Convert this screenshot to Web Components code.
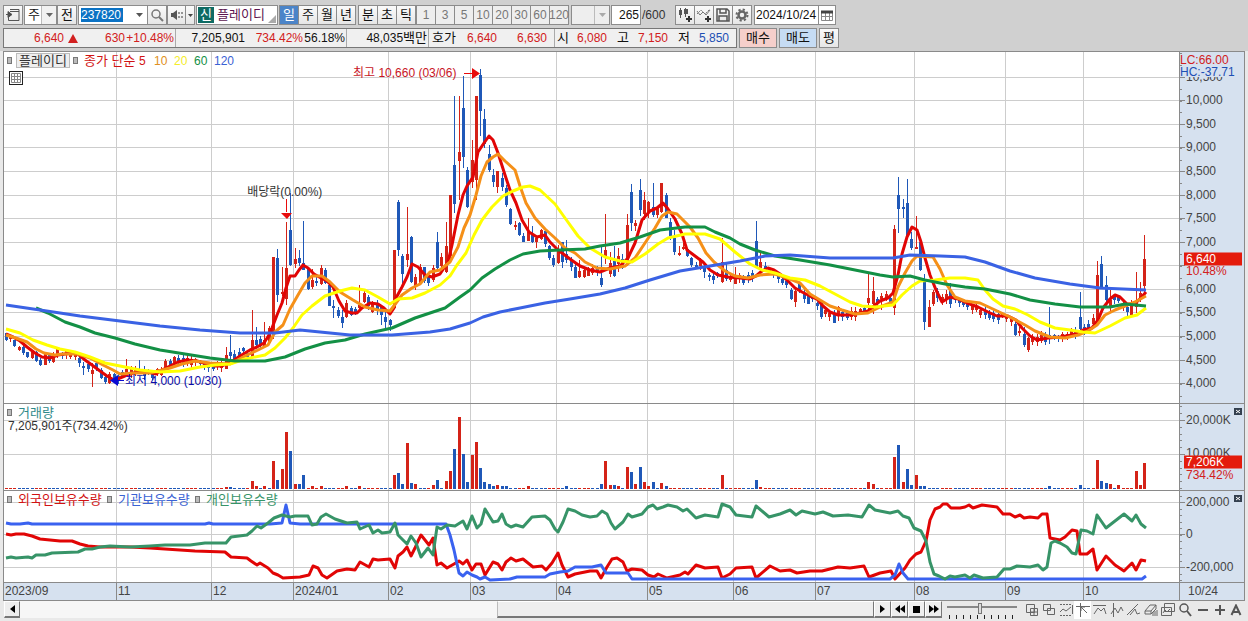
<!DOCTYPE html>
<html lang="ko">
<head>
<meta charset="utf-8">
<title>플레이디 차트</title>
<style>
html,body{margin:0;height:100%}
body{background:#e9e9e9;font:12px/16px "Liberation Sans","Noto Sans CJK KR",sans-serif;color:#111}
stock-app{min-height:100vh}
</style>
</head>
<body>
<stock-app></stock-app>

<script>
const define = (name, html, setup) => customElements.define(name, class extends HTMLElement {
  constructor(){
    super();
    const root = this.attachShadow({mode:'open'});
    const t = document.createElement('template');
    t.innerHTML = typeof html === 'function' ? html(this) : html;
    root.append(t.content.cloneNode(true));
    if (setup) setup(this, root);
  }
});

/* ---------- small controls ---------- */
define('tool-button', `<style>
:host{display:block;flex:none;width:var(--w,20px);height:20px}
button{display:flex;align-items:center;justify-content:center;width:100%;height:100%;padding:0;box-sizing:border-box;
 border:1px solid #8c8c8c;background:var(--bg,linear-gradient(#fafafa,#e6e6e6));color:var(--fg,#111);font:inherit;font-size:13px;white-space:nowrap}
</style><button type="button"><slot></slot></button>`, (el, root) => {
  if (el.title) root.querySelector('button').setAttribute('aria-label', el.title);
});

define('drop-down', el => `<style>
:host{display:block;position:relative;flex:none;width:var(--w,33px);height:20px}
select{appearance:none;width:100%;height:100%;box-sizing:border-box;border:1px solid #8c8c8c;border-radius:0;margin:0;padding:0 0 0 3px;background:linear-gradient(90deg,#fff 0,#fff calc(100% - 15px),#bbb calc(100% - 15px),#bbb calc(100% - 14px),#f1f1f1 calc(100% - 14px));color:#111;font:inherit;font-size:13px}
select:disabled{background:linear-gradient(90deg,#eee 0,#eee calc(100% - 15px),#bbb calc(100% - 15px),#bbb calc(100% - 14px),#eee calc(100% - 14px));opacity:1}
svg{position:absolute;right:4px;top:8px;pointer-events:none}
</style><select aria-label="${el.getAttribute('label')}" ${el.hasAttribute('off') ? 'disabled' : ''}><option>${el.getAttribute('value')}</option></select>
<svg width="7" height="4"><path d="M0 0h7L3.500 4z" fill="${el.hasAttribute('off') ? '#aaa' : '#666'}"/></svg>`);

/* ---------- top toolbar ---------- */
define('stock-toolbar', `<style>
:host{display:flex;align-items:center;height:20px}
.g{display:flex;flex:none;margin-right:1px}
.g.z{margin-right:0}.g.w{margin-right:2px}
.g tool-button+tool-button{margin-left:-1px}
.d{--fg:#777;--bg:#eee}
.code,.num,.date{height:20px;box-sizing:border-box;border:1px solid #8c8c8c;background:#fff;display:flex;align-items:center;flex:none}
input{border:0;padding:0;margin:0;font:inherit;background:none;min-width:0;color:inherit}
.code{width:54px;border-right:0;padding-left:2px}
.code input{width:42px;height:14px;background:#0b72c4;color:#fff}
.arr{width:15px;height:20px;box-sizing:border-box;border:1px solid #8c8c8c;border-width:1px 0;background:#fff;padding:0;flex:none;display:flex;align-items:center;justify-content:center}
.name{width:82px;height:20px;box-sizing:border-box;border:1px solid #8c8c8c;background:#fff;display:flex;flex:none;align-items:center;gap:3px;padding-left:1px;position:relative;font-size:13px;color:#5c1450;margin-right:1px}
.name b{background:#0f6b63;color:#fff;font-weight:400;width:16px;height:16px;line-height:16px;text-align:center}
.name input{width:52px}
.name i{position:absolute;right:1px;bottom:1px;border:4px solid #aaa;border-top-color:transparent;border-left-color:transparent}
.num{width:30px;justify-content:flex-end;padding-right:1px}.num input{width:22px;text-align:right}
.tot{width:34px;box-sizing:border-box;padding-left:1px;color:#333;flex:none}
.date{width:65px;padding-left:1px}.date input{width:62px}
</style>
<div class="g"><tool-button title="창 열기"><svg width="16" height="14" fill="none" stroke="#555"><path d="M5 1.500h9v11H3.500v-4M5 3.500h9" /><path d="M1 6.500h4M3 3.500v6l4-3z" fill="#444"/></svg></tool-button></div>
<drop-down label="구분" value="주"></drop-down>
<div class="g"><tool-button>전</tool-button></div>
<div class="code"><input aria-label="종목코드" value="237820"></div><button class="arr" aria-label="최근 종목"><svg width="7" height="4"><path d="M0 0h7L3.500 4z" fill="#555"/></svg></button>
<div class="g z"><tool-button title="검색"><svg width="14" height="14" fill="none" stroke="#777" stroke-width="1.500"><circle cx="6" cy="6" r="4"/><path d="M9 9l4 4" stroke-width="2"/></svg></tool-button></div>
<div class="g"><tool-button title="소리" style="--w:19px"><svg width="14" height="12"><path d="M1 4h2l4-3v10L3 8H1z" fill="#555"/><path d="M9 3v6M12 3v6" stroke="#777" stroke-width="1.500" stroke-dasharray="2 2"/></svg></tool-button><tool-button title="소리 메뉴" style="--w:10px"><svg width="5" height="3"><path d="M0 0h5L2.500 3z" fill="#444"/></svg></tool-button></div>
<div class="name"><b>신</b><input aria-label="종목명" value="플레이디"><i></i></div>
<div class="g w"><tool-button style="--bg:#4b84c8;--fg:#fff">일</tool-button><tool-button>주</tool-button><tool-button>월</tool-button><tool-button>년</tool-button></div>
<div class="g z"><tool-button>분</tool-button><tool-button>초</tool-button><tool-button>틱</tool-button></div>
<div class="g w d" id="mins"></div>
<drop-down label="사용자 주기" value="" off style="--w:39px;margin-right:1px"></drop-down>
<label class="num"><input aria-label="표시 봉 수" value="265"></label><span class="tot">/600</span>
<div class="g w"><tool-button title="봉 추가"><svg width="16" height="16"><path d="M3.500 1v10M8.500 1v9" stroke="#555"/><path d="M2 3h3v5H2zM7 2h4v5H7z" fill="#555"/><path d="M9 12h6M12 9v6" stroke="#333" stroke-width="2"/></svg></tool-button><tool-button title="지표 추가"><svg width="16" height="16" fill="none" stroke="#777"><path d="M1 7l4-4 4 4 5-5" stroke-dasharray="2 1"/><path d="M1 4l3 4 3-3 3 3 4-5"/><path d="M9 12h6M12 9v6" stroke="#333" stroke-width="2"/></svg></tool-button><tool-button title="저장"><svg width="14" height="14" fill="none" stroke="#555" stroke-width="1.500"><path d="M1 1h10l2 2v10H1zM4 1v4h6V1M3 13V8h8v5"/></svg></tool-button><tool-button title="설정"><svg width="14" height="14" fill="none" stroke="#666"><circle cx="7" cy="7" r="3.500" stroke-width="2.500"/><circle cx="7" cy="7" r="5.500" stroke-width="2" stroke-dasharray="2.200 2.120"/></svg></tool-button></div>
<label class="date"><input aria-label="날짜" value="2024/10/24"></label><tool-button title="달력" style="--w:18px;--bg:#fff;margin-left:-1px"><svg width="12" height="11" fill="none" stroke="#888"><path d="M.5 1.500h11v9H.5zM0 6.500h12M4.500 2v8M8.500 2v8"/><path d="M0 2h12" stroke="#444" stroke-width="3"/></svg></tool-button>`,
(el, root) => {
  root.getElementById('mins').innerHTML = [1,3,5,10,20,30,60,120].map(n => `<tool-button><span style="font-size:12px">${n}</span></tool-button>`).join('');
});

define('quote-bar', `<style>
:host{display:flex;align-items:center;gap:2px;height:20px}
.q{display:flex;flex:none;box-sizing:border-box;height:20px;border:1px solid #777;background:#f0f0f0;line-height:18px;width:734px}
.q>div{display:flex;box-sizing:border-box;border-right:1px solid #aaa}
.q>div:last-child{border:0}
span{text-align:right;white-space:pre}
.r{color:#d22020}.b{color:#1d4fb4}
em{font-style:normal;font-size:13px}
svg{margin:5px 0 0 4px}
</style>
<div class="q">
<div style="width:172px" class="r"><span style="width:60px">6,640</span><svg width="10" height="9"><path d="M5 0l5 9H0z" fill="#d22020"/></svg><span style="width:47px">630</span><span style="width:49px">+10.48%</span></div>
<div style="width:171px"><span style="width:69px">7,205,901</span><span style="width:58px" class="r">734.42%</span><span style="width:42px">56.18%</span></div>
<div style="width:82px"><span style="width:80px">48,035<em>백만</em></span></div>
<div style="width:126px"><span style="width:27px"><em>호가</em></span><span style="width:41px" class="r">6,640</span><span style="width:50px" class="r">6,630</span></div>
<div style="width:181px"><span style="width:14px"><em>시</em></span><span style="width:38px" class="r">6,080</span><span style="width:22px"><em>고</em></span><span style="width:39px" class="r">7,150</span><span style="width:22px"><em>저</em></span><span style="width:39px" class="b">5,850</span></div>
</div>
<tool-button style="--w:38px;--bg:#f6cfcb">매수</tool-button><tool-button style="--w:38px;--bg:#c6dcf4">매도</tool-button><tool-button>평</tool-button>`);

/* ---------- chart data (plot units) ---------- */
const STEP = 4.313, X0 = 6.700, N = 265;
const pts = s => s.trim().split(/\s+/).map(p => p.split(',').map(Number));
const ma5 = "6,334 13,337 20,341 27,347 35,353 42,357 50,358 58,355 65,354 72,353 78,354 85,360 92,365 100,371 107,376 114,380 120,378 127,375 134,373 141,371 148,372 156,374 162,370 170,366 178,362 187,360 197,361 207,364 215,366 222,366 228,363 234,360 240,356 250,350 257,347 264,343 269,335 272,328 277,315 282,303 286,288 290,276 295,276 299,270 303,265 308,268 314,274 321,278 327,281 333,287 339,301 345,311 352,313 357,313 362,308 370,303 378,304 384,308 390,314 394,308 396,298 402,287 407,277 412,264 418,267 425,275 432,277 440,274 448,262 452,245 458,215 463,195 467,186 473,177 478,152 484,143 489,136 493,140 498,153 505,175 510,190 516,203 522,220 529,232 537,237 545,235 550,242 558,250 570,259 580,266 590,270 600,272 610,268 620,266 628,258 635,243 642,220 650,211 657,208 663,203 668,209 675,219 682,234 687,250 695,256 703,262 710,270 718,275 728,277 740,278 750,279 756,276 762,271 768,268 774,270 780,274 787,280 795,288 802,292 810,296 817,299 823,306 830,312 838,315 850,315 860,313 868,311 874,306 880,301 888,298 893,293 898,275 902,254 907,237 912,227 917,230 921,242 925,258 930,275 936,290 942,302 950,297 958,299 967,303 978,307 988,312 997,316 1008,316 1016,320 1022,328 1030,336 1037,340 1048,338 1060,337 1072,335 1083,330 1092,328 1098,320 1103,308 1110,299 1115,295 1120,297 1127,304 1134,304 1140,299 1146,292";
const ma10 = "6,335 16,338 27,342 36,349 44,353 55,355 62,354 78,354 90,358 103,365 113,370 120,374 135,373 150,373 162,370 170,368 182,364 195,361 210,363 230,364 245,356 258,350 268,345 275,332 283,325 290,309 298,295 305,283 312,276 322,276 330,282 340,292 353,300 365,307 378,310 390,311 396,303 402,295 412,288 420,284 430,272 440,270 450,262 458,247 464,228 470,215 476,195 481,176 487,162 493,157 498,154 505,161 515,170 520,186 526,203 535,218 545,229 555,238 565,248 575,253 585,262 597,268 610,269 625,266 635,258 645,243 655,228 662,216 668,212 677,214 690,227 698,238 706,253 714,262 725,271 735,276 748,278 760,275 775,274 790,279 800,283 810,294 820,300 830,306 842,310 855,314 868,313 880,307 893,302 898,287 905,273 912,261 917,256 933,257 940,269 947,285 955,297 965,301 980,303 995,310 1010,317 1025,325 1035,331 1050,337 1065,338 1078,335 1088,331 1097,325 1105,315 1115,310 1125,306 1135,302 1146,296";
const ma20 = "6,329 20,333 33,340 47,345 60,349 75,352 90,357 105,363 120,366 140,370 160,372 180,371 200,367 215,365 230,364 245,359 265,355 275,348 285,338 293,328 302,315 312,306 325,296 340,291 352,288 365,290 378,297 390,304 398,299 412,298 425,293 440,285 450,276 457,265 466,253 474,235 482,220 492,207 503,196 513,191 523,187 530,186 540,190 555,204 565,218 578,236 590,248 605,257 620,261 632,262 645,254 658,244 668,238 685,234 705,234 720,239 735,252 750,264 762,270 775,273 790,278 805,280 820,286 835,294 850,302 862,306 875,307 893,305 902,295 912,286 920,281 935,280 950,278 965,278 978,280 985,290 993,299 1003,306 1015,309 1028,315 1040,322 1055,328 1070,330 1083,332 1095,333 1110,326 1125,318 1137,315 1146,308";
const ma60 = "36,308 48,313 65,322 80,327 95,333 115,338 135,344 160,350 185,354 210,358 235,361 265,361 285,357 305,349 325,343 345,340 365,334 392,328 415,318 445,308 460,297 470,290 482,278 495,269 510,260 523,254 540,251 560,250 585,249 600,246 620,243 640,237 660,230 685,227 705,227 715,232 730,238 740,244 755,250 775,256 800,260 830,265 855,270 880,275 893,277 910,276 925,280 945,284 965,287 985,289 1010,294 1030,300 1055,304 1080,307 1110,307 1125,304 1146,306";
const ma120 = "6,305 40,310 80,316 120,321 160,326 200,330 240,333 275,333 300,330 320,332 350,335 392,335 430,332 450,329 470,323 483,317 500,312 520,308 545,303 570,299 600,294 625,288 650,280 680,271 710,266 740,261 765,256 790,255 830,258 893,258 910,255 940,256 965,257 985,262 1010,271 1035,278 1070,284 1100,288 1146,290";

/* x,high,body top,body bottom,low,direction (1 up, 0 down) */
const bars = "6,333,333,340,341,0 15,340,340,346,347,0 19,346,347,350,351,1 23,345,347,353,355,0 27,352,352,357,358,0 31,350,351,358,359,1 36,351,352,361,362,0 40,358,360,365,366,0 44,352,353,365,365,1 49,353,354,361,363,0 53,352,355,362,363,1 57,348,349,356,358,1 83,362,366,368,375,0 92,363,370,374,387,1 97,362,363,369,371,0 101,368,370,378,379,0 105,374,377,382,384,0 109,372,374,383,384,1 113,373,374,382,383,0 127,359,369,373,374,1 139,360,370,372,373,0 152,370,373,378,380,0 162,367,369,375,376,1 166,359,361,368,369,1 174,356,357,363,364,1 227,347,355,369,369,1 231,335,352,356,360,0 248,350,353,357,360,0 253,310,340,357,357,1 257,327,340,345,346,0 261,336,339,346,348,0 265,322,340,347,348,1 269,326,328,343,344,1 274,257,257,335,339,1 278,249,258,295,302,0 282,267,292,294,296,1 286,222,268,299,305,1 290,193,230,265,266,0 295,248,259,264,268,1 299,250,258,263,266,0 303,221,263,270,270,0 308,267,269,289,290,0 312,269,280,287,289,1 317,275,281,283,286,0 321,265,268,284,285,1 325,268,270,283,284,0 329,284,285,306,306,0 334,300,306,308,318,0 338,307,310,316,318,0 342,310,317,323,328,0 347,300,303,317,318,1 351,306,308,315,316,0 360,285,305,308,309,1 364,290,293,302,303,1 368,295,297,306,310,0 373,301,303,312,313,1 377,300,304,311,315,0 381,305,306,315,325,0 386,311,317,322,328,0 390,319,320,325,331,0 395,250,250,308,308,1 399,200,202,250,256,0 403,254,256,274,285,0 407,207,254,260,267,1 411,236,237,282,283,0 416,274,277,286,290,1 420,264,267,284,285,1 424,267,267,281,283,0 429,275,276,283,286,0 433,265,268,280,282,1 437,232,242,268,270,0 442,253,257,266,268,1 446,222,246,272,273,1 450,195,195,256,260,1 455,96,165,204,213,0 459,96,152,161,200,1 463,76,108,157,168,0 467,167,170,207,208,0 472,140,160,182,188,1 476,96,96,180,200,1 481,69,75,111,136,0 485,109,119,144,148,0 489,145,154,170,172,0 494,169,175,182,187,0 498,171,171,187,193,1 502,173,178,187,191,0 506,185,188,205,207,0 511,208,209,224,225,0 515,221,225,227,230,1 519,222,223,235,236,0 524,233,236,242,242,0 528,218,232,241,241,1 532,226,235,242,243,0 537,236,238,242,248,1 541,229,230,239,240,1 545,230,231,244,247,0 550,245,246,258,260,0 554,255,258,265,267,0 558,245,249,263,264,1 562,242,242,262,268,0 567,240,254,260,263,0 575,263,267,278,278,0 580,260,271,277,278,1 584,268,270,277,278,1 588,267,270,276,276,1 593,264,268,273,275,1 601,246,278,285,287,0 606,214,250,256,264,1 610,252,263,274,277,1 614,246,261,276,277,0 618,248,256,264,272,1 623,254,259,268,269,0 627,214,225,265,266,1 631,184,192,223,231,0 636,220,223,226,231,1 640,179,190,210,216,0 645,192,200,214,220,1 649,201,202,212,218,1 653,183,207,215,217,0 657,206,208,215,218,1 662,183,183,212,213,1 666,193,195,218,218,0 670,218,222,236,240,0 675,230,238,252,255,0 679,246,253,255,256,1 683,243,247,249,250,1 688,248,249,256,257,0 692,257,258,265,267,0 696,262,265,267,269,0 705,264,266,272,278,0 709,273,275,277,281,0 714,273,276,280,284,0 722,238,262,282,283,1 726,264,270,279,281,0 735,267,277,284,284,1 757,221,241,268,268,0 761,251,262,268,272,1 765,262,266,271,272,0 791,288,290,299,300,0 795,289,291,302,307,1 800,282,284,290,293,0 808,292,295,304,304,0 822,300,303,317,319,0 834,310,313,323,323,0 839,306,307,316,321,1 869,274,298,303,310,1 873,277,291,304,314,1 882,293,296,299,310,1 891,294,298,304,305,0 895,225,229,308,315,1 899,177,195,209,233,0 904,199,207,209,218,0 908,179,203,236,238,0 912,232,239,248,250,0 916,216,247,249,249,1 921,239,242,270,271,0 925,274,280,322,330,0 929,300,307,327,327,1 934,290,292,304,306,1 938,288,291,298,302,0 951,283,290,304,308,0 1015,322,324,335,336,0 1020,327,331,333,336,1 1024,327,334,345,347,0 1029,337,338,350,352,1 1050,307,335,338,344,0 1080,292,317,329,331,0 1097,261,275,325,326,1 1102,256,264,287,289,0 1106,276,285,300,305,0 1110,290,300,306,311,1 1128,305,307,312,317,0 1132,300,303,315,316,1 1137,272,303,307,313,1 1141,282,293,300,302,1 1145,235,259,286,293,1";
/* x, top of the bar, direction */
const vols = "227,487,1 231,487,0 253,481,1 257,486,1 265,486,1 274,461,1 278,480,0 282,469,1 286,432,1 290,451,0 295,484,1 299,484,0 303,475,0 312,486,1 321,486,1 347,486,1 360,486,1 395,475,1 399,473,0 403,484,0 407,443,1 411,483,0 416,484,1 433,485,1 437,480,0 446,481,1 450,471,1 455,449,0 459,417,1 463,454,0 467,482,0 472,455,1 476,442,1 481,468,0 485,482,0 489,484,0 494,486,0 498,485,1 502,486,0 506,486,0 528,486,1 567,486,0 601,484,0 606,461,1 610,485,1 614,485,0 618,486,1 627,467,1 631,472,0 636,484,1 640,467,0 645,482,1 649,486,1 653,482,0 662,483,1 666,486,0 722,475,1 757,480,0 761,487,1 869,482,1 873,484,1 895,457,1 899,445,0 904,482,1 908,469,0 912,485,0 916,475,1 921,486,0 925,486,0 1050,486,0 1080,485,0 1097,460,1 1102,481,0 1106,483,0 1110,484,1 1119,485,1 1137,471,1 1141,485,1 1145,463,1";
const foreign = "6,534 11,535 16,534 24,534 32,536 40,539 50,540 60,541 72,541 80,544 88,546 100,547 130,547 150,548 165,549 180,550 195,551 225,552 231,557 247,558 251,561 257,565 260,563 268,568 273,573 278,575 283,578 300,577 309,575 313,566 318,568 322,575 327,578 337,571 347,569 355,570 360,562 369,567 373,559 378,560 390,559 395,568 398,556 403,552 407,547 411,556 415,548 418,541 421,535 429,545 433,538 437,565 441,563 447,568 454,564 459,561 463,564 467,560 472,570 476,564 481,564 485,575 493,562 498,564 502,570 506,562 511,558 516,561 523,559 533,567 542,566 546,570 552,563 558,553 562,565 568,577 575,574 590,571 597,571 601,578 607,567 612,559 617,558 623,562 627,571 632,569 642,570 648,575 654,577 658,574 667,578 680,575 685,572 688,574 696,565 705,568 718,567 722,578 730,574 736,568 752,567 756,578 770,566 780,571 790,570 797,573 810,571 822,571 838,567 850,568 864,566 869,577 880,573 891,571 895,579 905,568 910,560 916,554 921,552 926,541 930,520 935,509 940,507 943,504 947,504 951,508 960,508 965,507 969,505 973,508 982,505 997,507 1003,514 1010,514 1015,517 1020,515 1024,518 1030,517 1038,518 1042,514 1047,514 1050,538 1060,540 1065,537 1072,530 1077,531 1080,554 1087,554 1093,549 1097,570 1106,556 1115,565 1124,571 1132,563 1136,570 1141,560 1146,561";
const personal = "6,558 11,557 16,558 28,557 32,558 36,555 45,555 52,553 78,552 85,549 92,549 100,547 110,546 130,547 150,546 165,545 190,545 205,543 226,543 231,537 247,535 252,531 257,526 261,528 268,523 274,518 282,515 290,517 295,516 308,516 312,525 317,524 321,517 326,514 335,519 347,523 357,522 360,529 369,525 373,533 378,530 382,533 390,532 395,523 398,535 407,544 411,536 416,543 421,557 428,548 433,555 437,527 441,529 447,525 455,526 463,521 467,529 472,516 477,528 481,524 485,509 493,522 498,521 502,514 506,524 511,527 516,525 523,527 532,517 545,516 550,520 555,529 558,532 563,522 568,509 575,511 582,515 590,517 597,516 602,511 607,514 611,523 615,529 623,522 628,514 632,517 642,514 648,507 653,505 657,509 663,507 668,505 677,507 683,511 687,509 696,518 705,515 718,517 722,504 730,507 736,515 752,517 756,506 769,517 780,514 790,510 796,515 802,511 815,514 823,512 833,516 848,515 862,517 869,505 875,510 890,513 898,511 903,516 909,518 914,528 921,531 926,541 930,562 934,574 939,576 945,579 950,576 955,577 965,575 970,578 974,575 983,578 997,577 1004,569 1010,569 1017,566 1030,567 1038,565 1043,570 1047,567 1051,543 1055,541 1060,543 1067,547 1072,553 1076,554 1081,530 1087,531 1093,534 1097,515 1106,528 1124,514 1132,521 1136,515 1141,524 1146,528";
const inst = "6,523 11,524 20,524 28,523 32,524 205,524 209,523 213,524 270,524 282,523 286,505 290,523 300,524 446,524 450,535 454,550 459,573 463,576 467,572 472,575 477,577 480,579 485,577 490,580 510,579 517,577 545,577 550,574 560,572 568,571 575,567 592,567 601,565 606,573 628,573 632,579 890,579 895,575 899,564 903,573 908,579 1142,579 1146,576";

const at = (line, x) => {
  for (let i = 1; i < line.length; i++) if (x <= line[i][0]) {
    const [a,b] = line[i-1], [c,d] = line[i];
    return b + (d-b)*(Math.max(x,a)-a)/(c-a);
  }
  return line[line.length-1][1];
};
const idx = x => Math.round((x - X0) / STEP);
const pos = i => Math.round(X0 + i*STEP) - 1;
const UP = '#d42318', DOWN = '#1f58b8';
const line = (s, c) => `<polyline points="${s}" fill="none" stroke="${c}" stroke-width="3" stroke-linejoin="round"/>`;
const months = [[116,'11'],[211,'12'],[293,'2024/01'],[388,'02'],[470,'03'],[556,'04'],[647,'05'],[733,'06'],[815,'07'],[914,'08'],[1005,'09'],[1083,'10']];

function drawBars(){
  const base = pts(ma5), map = new Map(pts(bars).map(b => [idx(b[0]), b]));
  let s = '';
  for (let i = 0; i < N; i++) {
    let b = map.get(i); const x = pos(i);
    if (!b) {
      const y = Math.round(at(base, x+5)), k = (i*37)%11, up = (i*29)%7 < 3 ? 1 : 0, t = y - 3 + k%3;
      b = [x, t-1-k%4, t, t+3+k%4, t+5+k%4+(i%3), up];
    }
    const c = b[5] ? UP : DOWN;
    s += `<path d="M${x} ${b[1]}h1v${Math.max(1,b[4]-b[1])}h-1z M${x-1} ${b[2]}h3v${Math.max(1,b[3]-b[2])}h-3z" fill="${c}"/>`;
  }
  return s;
}
function drawVolumes(){
  const map = new Map(pts(vols).map(v => [idx(v[0]), v]));
  let s = '';
  for (let i = 0; i < N; i++) {
    const v = map.get(i) || [0, 488, (i*29)%7 < 3 ? 1 : 0], x = pos(i);
    s += `<path d="M${x-1} ${v[1]}h3V489h-3z" fill="${v[2] ? UP : DOWN}"/>`;
  }
  return s;
}
const P = {
  price: {y:52, h:351, grid:[77,100,124,147,171,195,218,242,265,289,312,336,360,383], minor:11.8,
    draw: () => drawBars() + line(ma5,'#e10505') + line(ma10,'#f59018') + line(ma20,'#ffff00') + line(ma60,'#139045') + line(ma120,'#3a62e4') +
      `<path d="M286 199h1v13h-1z M281 213h11l-5 6z M464 73h8v-5l8 5.500-8 5.500v-5h-8z" fill="#e80c0c"/><path d="M124 381h-6v5l-8-5.500 8-5.500v5h6z" fill="#0a0ad2"/>`,
    labels: [[100,'10,000'],[124,'9,500'],[147,'9,000'],[171,'8,500'],[195,'8,000'],[218,'7,500'],[242,'7,000'],[289,'6,000'],[312,'5,500'],[336,'5,000'],[360,'4,500'],[383,'4,000']]},
  volume: {y:404, h:86, grid:[420,454], minor:6.800, draw: drawVolumes, labels:[[420,'20,000K'],[453,'10,000K']]},
  holders:{y:491, h:91, grid:[502,534,567], minor:6.500, draw: () => line(foreign,'#e10505') + line(inst,'#3a62f0') + line(personal,'#379468'),
    labels:[[502,'200,000'],[534,'0'],[567,'-200,000']]}
};

define('chart-plot', `<style>
:host{display:block;position:relative;overflow:hidden;background:#fff}
svg{position:absolute;inset:0;width:100%;height:100%;display:block}
</style><svg preserveAspectRatio="none"></svg><slot></slot>`, (el, root) => {
  const p = P[el.getAttribute('kind')], svg = root.querySelector('svg');
  svg.setAttribute('viewBox', `4 ${p.y} 1175 ${p.h}`);
  svg.innerHTML = `<path fill="#cdcdcd" d="${p.grid.map(y => `M4 ${y}h1175v1H4z`).join('')}${months.map(m => `M${m[0]} ${p.y}h1v${p.h}h-1z`).join('')}"/>` + p.draw();
});

define('value-axis', `<style>
:host{display:block;position:relative;overflow:hidden;background:#d6e1ef;border-left:1px solid #8a8a8a;color:#444}
svg{position:absolute;left:0;top:0;width:6px;height:100%}
span,::slotted(span){position:absolute;left:6px;transform:translateY(-50%);white-space:nowrap}
</style><svg preserveAspectRatio="none"></svg><div id="l"></div><slot></slot>`, (el, root) => {
  const p = P[el.getAttribute('kind')], svg = root.querySelector('svg');
  svg.setAttribute('viewBox', `0 ${p.y} 6 ${p.h}`);
  let d = p.grid.map(y => `M0 ${y}h5v1H0z`).join('');
  for (let y = p.grid[0]; y < p.y+p.h; y += p.minor) d += `M0 ${Math.round(y)}h2v1H0z`;
  for (let y = p.grid[0]; y > p.y; y -= p.minor) d += `M0 ${Math.round(y)}h2v1H0z`;
  svg.innerHTML = `<path fill="#888" d="${d}"/>`;
  root.getElementById('l').innerHTML = p.labels.map(([y,t]) => `<span style="top:${((y-p.y)/p.h*100).toFixed(1)}%">${t}</span>`).join('');
});

define('time-axis', `<style>
:host{display:block;background:#d6e1ef;color:#444;line-height:17px}
div{position:relative;height:100%}
span{position:absolute;top:0;height:100%;padding-left:1px;border-left:1px solid #8a8a8a;box-sizing:border-box}
span:first-child{border:0}
</style><div></div>`, (el, root) => {
  root.querySelector('div').innerHTML = `<span style="left:0">2023/09</span>` + months.map(([x,t]) => `<span style="left:${((x-4)/1175*100).toFixed(2)}%">${t}</span>`).join('');
});

define('legend-mark', `<style>:host{display:inline-block;width:3px;height:5px;border:1px solid #777;background:#bbb;flex:none}</style>`);
define('close-mark', `<style>:host{display:block;position:absolute;right:2px;top:4px;width:8px;height:7px}
button{display:block;width:8px;height:7px;padding:0;border:0;background:#34404f}svg{display:block}</style><button aria-label="닫기"><svg width="8" height="7" stroke="#fff" fill="none"><path d="M2 2l4 3M6 2L2 5"/></svg></button>`);

define('stock-chart', `<style>
:host{display:grid;grid-template-columns:minmax(0,1fr) 65px;grid-template-rows:351fr 87fr 92fr 18px;border:1px solid #8a8a8a;box-sizing:border-box;min-height:420px}
.t{border-top:1px solid #8a8a8a}
.lg{position:absolute;left:3px;top:0;display:flex;align-items:center;height:17px;font-size:13px;white-space:nowrap}
.lg legend-mark{margin-right:6px}
.n{font-size:12px}
.btn{font:inherit;font-size:13px;line-height:14px;height:15px;width:54px;padding:0;border:1px solid #bbb;background:#eee;color:#333;margin:0 3px 0 -2px}
.a{position:absolute;white-space:nowrap;transform:translateY(-50%)}
.grid{position:absolute;left:5px;top:19px;width:14px;height:14px;padding:0;border:1px solid #222;background:#fff}
.grid svg{display:block}
.tag{background:#e41b0c;color:#fff;width:56px;height:13px;line-height:13px;left:4px!important;padding-left:2px}
.r{color:#d22020}
.end{background:#d6e1ef;border-left:1px solid #8a8a8a;color:#444;padding-left:8px;line-height:17px}
.hl{position:absolute;left:0;top:2px;line-height:12px;white-space:nowrap}
.cut{position:absolute;left:6px;top:25px;height:6px;overflow:hidden}
.cut i{display:block;margin-top:-6px;line-height:12px;font-style:normal}
</style>
<chart-plot kind="price">
 <div class="lg"><legend-mark></legend-mark><button class="btn">플레이디</button><legend-mark></legend-mark><span style="color:#d11212;width:70px">종가 단순 <span class="n">5</span></span><span class="n" style="color:#e09020;width:20px">10</span><span class="n" style="color:#f4ec2a;width:20px">20</span><span class="n" style="color:#139045;width:20px">60</span><span class="n" style="color:#3a62d4">120</span></div>
 <button class="grid" aria-label="표 보기"><svg width="12" height="12" fill="none" stroke="#888"><path d="M1.500 1.500h9v9h-9zM1 4.500h10M1 7.500h10M4.500 1v10M7.500 1v10"/></svg></button>
 <span class="a" style="left:29.700%;top:6%;color:#c8141e">최고 10,660 (03/06)</span>
 <span class="a" style="left:20.700%;top:40%;color:#333">배당락(0.00%)</span>
 <span class="a" style="left:10.300%;top:93.700%;color:#0a0aa8">최저 4,000 (10/30)</span>
</chart-plot>
<value-axis kind="price"><div class="cut"><i>10,500</i></div><div class="hl"><div class="r">LC:66.00</div><div style="color:#1d4fb4">HC:-37.71</div></div><span class="r" style="top:62.400%">10.48%</span><span class="tag" style="top:58.900%">6,640</span></value-axis>
<chart-plot kind="volume" class="t"><div class="lg" style="color:#2f8a8a"><legend-mark></legend-mark>거래량</div><span class="a" style="left:4px;top:25%;color:#333">7,205,901주(734.42%)</span></chart-plot>
<value-axis kind="volume" class="t"><span class="r" style="top:82%">734.42%</span><span class="tag" style="top:68%">7,206K</span><close-mark></close-mark></value-axis>
<chart-plot kind="holders" class="t"><div class="lg"><legend-mark></legend-mark><span style="color:#d11212;width:89px">외국인보유수량</span><legend-mark></legend-mark><span style="color:#3a62d4;width:77px">기관보유수량</span><legend-mark></legend-mark><span style="color:#379468">개인보유수량</span></div></chart-plot>
<value-axis kind="holders" class="t"><close-mark></close-mark></value-axis>
<time-axis class="t"></time-axis><div class="end t">10/24</div>`);

/* ---------- footer ---------- */
const icons = [
 ['복사','M1.500 1.500h8v8h-8zM5.500 5.500h7v7h-7zM5 9h8M9 5v8'],
 ['창 겹치기','M1.500 1.500h7v6h-7zM5.500 5.500h7v6h-7z'],
 ['구간','M1 1.500h2m1 0h2m1 0h2m1 0h2M1 12.500h2m1 0h2m1 0h2m1 0h2M1 9l3-3 3 2 5-4M13.500 2v9'],
 ['십자선','M4.500 0v14M0 3.500h14M5 4l6 6M5 8V4h4'],
 ['고점 추세','M0 2.500h13M1 11l4-6 3 3 3-3 2 6'],
 ['세로선','M3.500 0v14M1 11l4-6 3 5 3-6 2 4'],
 ['추세선','M0 12l11-11M3 12l5-6 2 5 3-1'],
 ['지우개','M1 8l5-6h6l-5 6zM1 8v3h6V8M7 11l5-5V2M9 13v-4M11 13V8M13 13V7'],
 ['차트 저장','M3.500 .5h10v8h-10zM.5 4.500h10v8H.5zM2 10l2-3 2 2 3-3'],
];
define('chart-footer', `<style>
:host{display:flex;align-items:flex-start;height:20px;background:#e9e9e9}
button{padding:0;margin:0;box-sizing:border-box;height:17px;width:17px;border:1px solid #999;border-top-color:#fff;border-left-color:#fff;border-right-color:#777;border-bottom:2px solid #777;background:#eee;display:flex;align-items:center;justify-content:center;flex:none}
.track{flex:1;display:flex;background:#f6f6f6;height:17px;min-width:0}
.thumb{margin-left:55.800%;flex:1;box-sizing:border-box;background:#eee;border:1px solid #777;border-top-color:#fff;border-left-color:#bbb;border-bottom-width:2px}
.sl{position:relative;width:70px;height:18px;margin:0 6px 0 5px;flex:none;background:repeating-linear-gradient(90deg,#222 0,#222 1px,transparent 1px,transparent 7px) 2px 14px/66px 4px no-repeat}
input{appearance:none;display:block;width:70px;height:14px;margin:0;background:linear-gradient(#888,#888) 0 5px/100% 2px no-repeat}
input::-webkit-slider-thumb{appearance:none;width:4px;height:11px;background:#ddd;border:1px solid #777;box-sizing:border-box}
.i{border:0;background:none;height:18px;width:17px}
.i.on{background:#fff}
</style>
<button aria-label="이전" style="width:16px"><svg width="5" height="8"><path d="M5 0v8L0 4z"/></svg></button>
<div class="track"><div class="thumb"></div></div>
<button aria-label="다음"><svg width="5" height="8"><path d="M0 0v8l5-4z"/></svg></button>
<button aria-label="뒤로"><svg width="10" height="8"><path d="M5 0v8L0 4zM10 0v8L5 4z"/></svg></button>
<button aria-label="정지"><svg width="7" height="7"><path d="M0 0h7v7H0z"/></svg></button>
<button aria-label="앞으로"><svg width="10" height="8"><path d="M0 0v8l5-4zM5 0v8l5-4z"/></svg></button>
<div class="sl"><input type="range" aria-label="속도" value="47"></div>
${icons.map(([n,d],i) => `<button class="i${i===3?' on':''}" aria-label="${n}"><svg width="14" height="14" fill="none" stroke="#666"><path d="${d}"/></svg></button>`).join('')}
<button class="i" aria-label="돋보기" style="width:18px"><svg width="14" height="14" fill="none" stroke="#555" stroke-width="1.500"><circle cx="6" cy="5" r="4"/><path d="M9 8l4 5" stroke-width="2"/></svg></button>
<button class="i" aria-label="축소"><svg width="10" height="10" stroke="#555" stroke-width="2"><path d="M0 5h10"/></svg></button>
<button class="i" aria-label="확대"><svg width="12" height="12" stroke="#555" stroke-width="2"><path d="M1 6h10M6 1v10"/></svg></button>
<button class="i" aria-label="자동" style="width:16px"><svg width="12" height="12" fill="none" stroke="#555" stroke-width="2"><path d="M1.500 11L6 1.500 10.500 11M3 8h6"/></svg></button>`);

define('stock-app', `<style>
:host{display:flex;flex-direction:column}
header{background:#d0d0d0;display:flex;flex-direction:column;gap:3px;padding:5px 0 3px 3px;overflow:hidden}
stock-chart{flex:1;margin:0 3px}
chart-footer{padding:0 4px}
</style>
<header><stock-toolbar></stock-toolbar><quote-bar></quote-bar></header>
<stock-chart></stock-chart>
<chart-footer></chart-footer>`);
</script>
</body>
</html>
